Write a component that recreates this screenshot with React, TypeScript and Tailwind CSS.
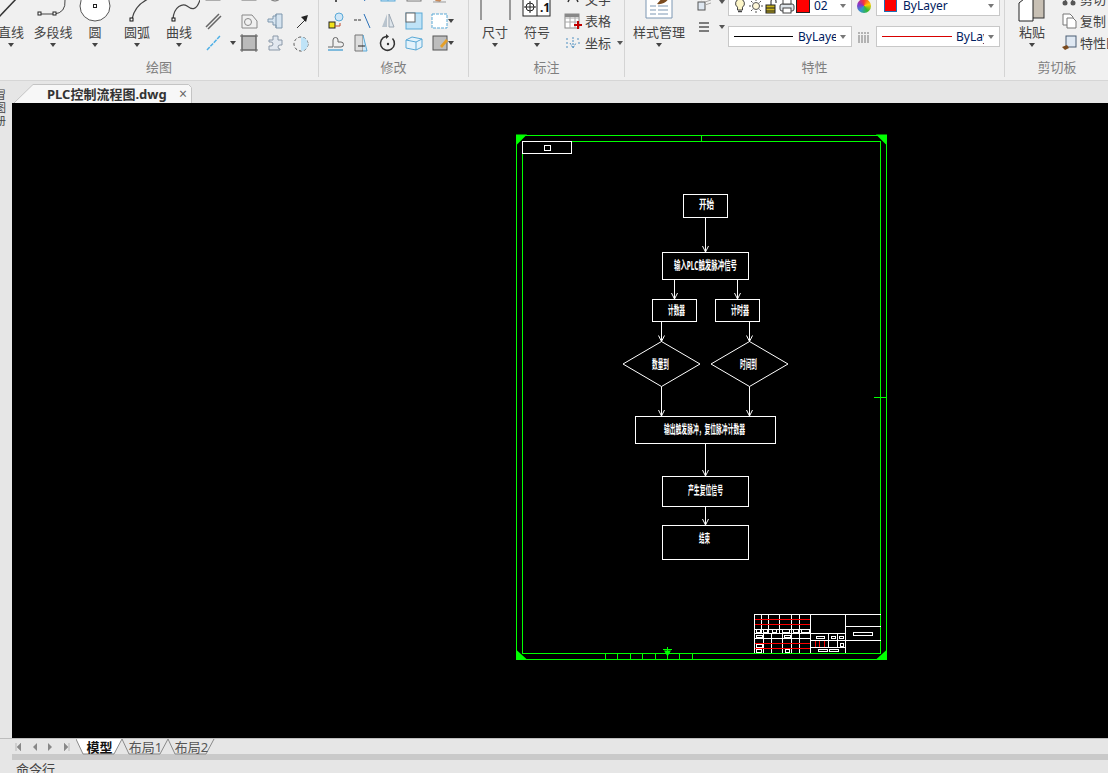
import type { ReactNode } from "react"

function Caret({ className = "" }: { className?: string }) {
  return <div className={`w-0 h-0 border-x-[3px] border-x-transparent border-t-[4px] border-t-[#444] ${className}`} />
}

function Ic({ children, size = 20, w }: { children: ReactNode; size?: number; w?: number }) {
  return (
    <svg width={w ?? size} height={size} viewBox={`0 0 ${w ?? size} ${size}`} fill="none" className="shrink-0">
      {children}
    </svg>
  )
}

function LargeTool({ label, icon, className = "w-[42px]" }: { label: string; icon: ReactNode; className?: string }) {
  return (
    <div className={`flex flex-col items-center h-[58px] shrink-0 ${className}`}>
      <div className="h-[24px] w-full flex justify-center items-end overflow-hidden">{icon}</div>
      <span className="text-[13px] leading-[16px] mt-0 whitespace-nowrap text-[#444]">{label}</span>
      <Caret className="mt-[3px]" />
    </div>
  )
}

function Panel({ label, width, children }: { label: string; width: string; children: ReactNode }) {
  return (
    <div className={`h-[77px] flex flex-col shrink-0 border-r border-[#d4d4d4] ${width}`}>
      <div className="h-[58px] flex overflow-hidden">{children}</div>
      <div className="h-[19px] text-center text-[13px] leading-[18px] text-[#7f7f7f]">{label}</div>
    </div>
  )
}

function SmallGrid({ rows, className = "" }: { rows: ReactNode[][]; className?: string }) {
  return (
    <div className={`flex flex-col -mt-[12px] ${className}`}>
      {rows.map((r, i) => (
        <div key={i} className="h-[22px] flex items-center">
          {r.map((c, j) => (
            <div key={j} className="w-[26px] h-[22px] flex items-center justify-center">{c}</div>
          ))}
        </div>
      ))}
    </div>
  )
}

function Select({ children, width = "w-[124px]" }: { children: ReactNode; width?: string }) {
  return (
    <div className={`h-[21px] ${width} bg-white border border-[#c8c8c8] flex items-center pl-[4px] pr-[5px] shrink-0`}>
      <div className="flex-1 flex items-center min-w-0 overflow-hidden">{children}</div>
      <Caret className="border-t-[#777] ml-[4px]" />
    </div>
  )
}

const blue = "#5aa9d6"
const gray = "#6b6b6b"

const drawGrid: ReactNode[][] = [
  [
    <Ic><rect x="3" y="3" width="14" height="8" stroke={gray} /></Ic>,
    <Ic><circle cx="10" cy="5" r="7" stroke={gray} /></Ic>,
    <Ic><path d="M4 2v8h13M6 8h9" stroke={gray} /></Ic>,
  ],
  [
    <Ic><path d="M3 4h10l5 6v7H3z" stroke="#888" /><circle cx="9" cy="11" r="3.5" stroke="#888" /></Ic>,
    <Ic><path d="M3 8h5V5h3V3h6v14h-6v-3H8v-3H3z" fill="#d6e4f0" stroke="#7f97ad" /><path d="M11 3v14" stroke="#7f97ad" /></Ic>,
    <Ic><path d="M6 17l9-9" stroke="#333" /><path d="M10 6l7-2-2 7z" fill="#222" /></Ic>,
  ],
  [
    <Ic><rect x="3" y="3" width="14" height="14" fill="#bbb" stroke="#666" /><path d="M1 3h18M1 17h18M3 1v18M17 1v18" stroke="#666" /></Ic>,
    <Ic><path d="M4 7h4V3h5v4h4v5h-2a2 2 0 1 0 0 4v1H4v-4h2a2 2 0 1 0 0-4H4z" fill="#e2e8f0" stroke="#8a98a8" /></Ic>,
    <Ic><circle cx="10" cy="11" r="7" stroke="#555" strokeDasharray="3 2" /><path d="M10 11h7a7 7 0 0 1-7 7z" fill="#bfe3f7" /><path d="M10 4v7h7a7 7 0 0 0-7-7z" fill="#bfe3f7" /></Ic>,
  ],
]

const modifyGrid: ReactNode[][] = [
  [
    <Ic><path d="M10 6v7" stroke="#555" strokeWidth="2" /></Ic>,
    <Ic><path d="M7 3l6 9" stroke="#2a70b8" /></Ic>,
    <Ic><rect x="3" y="1" width="14" height="11" fill="#cfe8fa" stroke="#5aa9d6" /><path d="M10 1v11" stroke="#5aa9d6" /></Ic>,
    <Ic><rect x="3" y="1" width="14" height="11" fill="#fff" stroke="#777" /></Ic>,
    <Ic><path d="M5 12l6-9 4 3-5 7z" fill="#c98a5a" /><path d="M3 13h13" stroke="#999" /></Ic>,
  ],
  [
    <Ic><rect x="3" y="11" width="6" height="6" fill="#f2e21a" stroke="#222" /><circle cx="13" cy="6" r="4" fill="#cfe6f7" stroke={blue} /><path d="M9 15h5v-3" stroke="#c04a2a" /></Ic>,
    <Ic><path d="M2 9h8" stroke="#333" strokeDasharray="3 1" /><path d="M12 3l6 14" stroke="#2a70b8" /></Ic>,
    <Ic><path d="M9 3L4 16h5z" fill="#b9c4ce" /><path d="M11 3l5 13h-5z" fill="#dfe6ec" stroke="#9aa6b2" /></Ic>,
    <Ic><rect x="2" y="2" width="16" height="16" fill="#bfe3f7" stroke="#5aa9d6" /><rect x="2" y="2" width="9" height="9" fill="#fff" stroke="#666" /></Ic>,
    <Ic><rect x="2" y="3" width="15" height="14" fill="#fff" stroke={blue} strokeDasharray="3 1" /></Ic>,
  ],
  [
    <Ic><path d="M2 14h5V7a2.500 2.500 0 0 1 5 0v2h3a2.500 2.500 0 0 1 0 5H8" stroke="#666" /><path d="M2 17h15" stroke={blue} strokeWidth="1.500" /></Ic>,
    <Ic><path d="M3 2h8v16H3z" fill="#ddd" stroke="#777" /><path d="M11 2l4 16h-4" fill="#cfe8fa" stroke={blue} /><path d="M6 13h7" stroke="#222" /></Ic>,
    <Ic><path d="M14.500 5.500A7 7 0 1 1 8 3.500" stroke="#333" strokeWidth="1.500" /><path d="M8 1v5l3-2.500z" fill="#333" /><circle cx="10" cy="11" r="1.200" fill="#333" /></Ic>,
    <Ic><path d="M2 7l6-3 10 2v8l-6 3-10-2z" fill="#e3f2fb" stroke={blue} /><path d="M2 7l10 2v8M12 9l6-3" stroke={blue} /></Ic>,
    <Ic><rect x="3" y="3" width="14" height="14" fill="#bdbdbd" stroke="#555" /><path d="M10 13l6-7 2 2-6 7z" fill="#e4a02a" /></Ic>,
  ],
]

function SmallLabelRow({ icon, label, caret }: { icon: ReactNode; label: string; caret?: boolean }) {
  return (
    <div className="h-[22px] flex items-center gap-[3px] whitespace-nowrap">
      {icon}
      <span className="text-[13px] leading-[16px] text-[#444]">{label}</span>
      {caret && <Caret className="ml-[3px] border-t-[#555]" />}
    </div>
  )
}

function LayerStateIcons() {
  return (
    <div className="flex items-center gap-[1px]">
      <Ic size={16} w={14}><path d="M7 1a4.500 4.500 0 0 0-2.500 8.200V12h5V9.200A4.500 4.500 0 0 0 7 1z" fill="#fdf6c8" stroke="#444" /><path d="M5 13.500h4" stroke="#444" strokeWidth="1.500" /></Ic>
      <Ic size={16}><circle cx="8" cy="8" r="3.500" fill="#fff8d8" stroke="#555" /><path d="M8 1v2M8 13v2M1 8h2M13 8h2M3 3l1.500 1.500M13 3l-1.500 1.500M3 13l1.500-1.500M13 13l-1.500-1.500" stroke="#555" /></Ic>
      <Ic size={16} w={13}><rect x="1" y="7" width="9" height="8" fill="#c9b21a" stroke="#222" /><path d="M6 7V3a2.500 2.500 0 0 1 5 0v2" stroke="#222" /><path d="M1 10h9M1 13h9" stroke="#222" /></Ic>
      <Ic size={16}><rect x="1" y="6" width="14" height="7" rx="2" fill="#dfe5ea" stroke="#444" /><rect x="4" y="1" width="8" height="5" fill="#fff" stroke="#444" /><rect x="4" y="10" width="8" height="5" fill="#fff" stroke="#444" /></Ic>
      <div className="w-[14px] h-[14px] bg-[#ff0000] border border-[#222]" />
      <span className="ml-[3px] text-[12px] leading-[16px] text-[#002060]">02</span>
    </div>
  )
}

function TitleBlock() {
  const whites = [
    [756, 629, 4, 2.500], [763, 629, 4, 2.500], [772, 629, 4, 2.500], [782, 629, 7, 2.500], [793, 629, 5, 2.500], [801, 629, 8, 2.500],
    [756, 634.500, 6, 2.500], [784, 634.500, 6, 2.500], [756, 643.500, 6, 3.500], [756, 648.500, 5, 3], [785, 648.500, 4, 3],
    [816, 635.500, 8, 2.500], [831, 635.500, 4, 2.500], [839, 635.500, 4, 2.500], [840, 642.500, 3, 3], [818, 648.500, 9, 2.500], [829, 648.500, 9, 2.500],
    [853.500, 631.500, 19, 3],
  ]
  const v = [
    [761.500, 613.500, 632.500], [768.500, 613.500, 632.500], [779.500, 613.500, 632.500], [791.500, 613.500, 652.500], [799.500, 613.500, 652.500],
    [763.500, 632.500, 652.500], [771.500, 632.500, 652.500], [782.500, 632.500, 652.500], [810.500, 613.500, 652.500], [845.500, 613.500, 652.500],
    [828.500, 632.500, 646.500], [837.500, 632.500, 646.500], [754.500, 613.500, 652.500],
  ]
  const h = [
    [754.500, 810.500, 628.500], [754.500, 845.500, 632.500], [754.500, 810.500, 637.500], [810.500, 845.500, 639.500], [810.500, 845.500, 646.500],
    [845.500, 880.500, 625.500], [845.500, 880.500, 639.500], [754.500, 880.500, 613.500],
  ]
  return (
    <g stroke="#fff">
      {v.map(([x, a, b], i) => <path key={i} d={`M${x} ${a}V${b}`} />)}
      {h.map(([a, b, y], i) => <path key={i} d={`M${a} ${y}H${b}`} />)}
      {whites.map(([x, y, w, hh], i) => <rect key={i} x={x} y={y} width={w} height={hh} fill="none" />)}
      <path d="M755 618.500H810M755 623.500H810M755 642.500H810M755 647.500H810M815.500 640V646M819.500 640V646M824.500 640V646" stroke="#ff0000" />
    </g>
  )
}

function Arrow({ x, y1, y2 }: { x: number; y1: number; y2: number }) {
  return <path d={`M${x} ${y1}V${y2}M${x - 3} ${y2 - 6}L${x} ${y2}L${x + 3} ${y2 - 6}`} />
}

const boxes = [
  [683.500, 193.500, 44, 23], [662.500, 251.500, 86, 27], [652.500, 298.500, 44, 22], [715.500, 298.500, 44, 22],
  [635.500, 415.500, 140, 27], [662.500, 475.500, 86, 30], [662.500, 524.500, 86, 34],
]

const labels: [string, number, number, number][] = [
  ["开始", 699, 208, 15],
  ["输入PLC触发脉冲信号", 674, 269, 63],
  ["计数器", 668, 314, 17],
  ["计时器", 731, 314, 18],
  ["数量到", 652, 368, 17],
  ["时间到", 740, 368, 17],
  ["输出触发脉冲，复位脉冲计数器", 664, 433, 81],
  ["产生复位信号", 688, 494, 35],
  ["结束", 699, 542, 11],
]

function Drawing() {
  return (
    <svg viewBox="12 103 1096 635" className="w-full h-full block" fill="none">
      <g shapeRendering="crispEdges" stroke="#00ff00">
        <rect x="516.500" y="134.500" width="370" height="524" />
        <rect x="522.500" y="140.500" width="358" height="512" />
        <path d="M701.500 134.500V141M874 396.500H887M605.500 652.500V658M617.500 652.500V658M630.500 652.500V658M642.500 652.500V658M655.500 652.500V658M679.500 652.500V658M692.500 652.500V658M663 648.500H672M667.500 646V658" />
      </g>
      <g fill="#00ff00">
        <path d="M516 134h11l-11 11zM887 134h-11l11 11zM516 659h11l-11-10zM887 659h-11l11-10z" />
        <path d="M664 650h7l-3.500 6z" />
      </g>
      <g stroke="#fff" shapeRendering="crispEdges">
        <rect x="522.500" y="140.500" width="49" height="12" />
        <rect x="544.500" y="144.500" width="6" height="5" />
        {boxes.map(([x, y, w, h], i) => <rect key={i} x={x} y={y} width={w} height={h} />)}
      </g>
      <g stroke="#fff">
        <path d="M623 363.500L661.500 341L700 363.500L661.500 386ZM711 363.500L749.500 341L788 363.500L749.500 386Z" />
        <Arrow x={705.500} y1={216.500} y2={251.500} />
        <Arrow x={674.500} y1={278.500} y2={298.500} />
        <Arrow x={737.500} y1={278.500} y2={298.500} />
        <Arrow x={661.500} y1={320.500} y2={341} />
        <Arrow x={749.500} y1={320.500} y2={341} />
        <Arrow x={661.500} y1={386} y2={415.500} />
        <Arrow x={749.500} y1={386} y2={415.500} />
        <Arrow x={705.500} y1={442.500} y2={475.500} />
        <Arrow x={705.500} y1={505.500} y2={524.500} />
      </g>
      <g shapeRendering="crispEdges"><TitleBlock /></g>
      {labels.map(([t, x, y, w]) => (
        <text key={t} x={x} y={y} textLength={w} lengthAdjust="spacingAndGlyphs" fontSize="12" fontWeight="700" fill="#fff">{t}</text>
      ))}
    </svg>
  )
}

function SheetTab({ label, active }: { label: string; active?: boolean }) {
  return (
    <div className={`relative h-[16px] w-[47px] -mr-[1px] flex items-center justify-center shrink-0 ${active ? "font-bold text-[#111]" : "text-[#555]"}`}>
      <svg width="47" height="16" viewBox="0 0 47 16" className="absolute inset-0">
        <path d="M0 0L7 15H38L46 0" fill={active ? "#fff" : "none"} stroke="#8a8a8a" />
      </svg>
      <span className="relative text-[13px] leading-[16px]">{label}</span>
    </div>
  )
}

export default function App() {
  return (
    <div className="w-[1108px] h-[773px] overflow-hidden flex flex-col bg-[#e6e6e6] font-['Noto_Sans','Noto_Sans_CJK_SC',sans-serif]">
      {/* ribbon */}
      <div className="h-[81px] shrink-0 flex bg-[#f0f0f0] border-b border-[#d6d6d6] overflow-hidden">
        <Panel label="绘图" width="w-[319px]">
          <div className="flex -ml-[10px]">
            <LargeTool label="直线" icon={<Ic size={24} w={42}><path d="M8 18L27 -2" stroke="#333" strokeWidth="1.500" /></Ic>} />
            <LargeTool label="多段线" icon={<Ic size={24} w={42}><path d="M8 14h14q12-1 11-14" stroke="#444" /><rect x="6" y="12" width="3" height="3" fill="#fff" stroke="#222" /><rect x="21" y="12" width="3" height="3" fill="#fff" stroke="#222" /></Ic>} />
            <LargeTool label="圆" icon={<Ic size={24} w={42}><circle cx="21" cy="6" r="15" fill="#fff" stroke="#555" /><rect x="19.500" y="4.500" width="3" height="3" fill="#fff" stroke="#222" /></Ic>} />
            <LargeTool label="圆弧" icon={<Ic size={24} w={42}><path d="M16 19C18 9 24 3 32 -1" stroke="#444" strokeWidth="1.200" /><rect x="14" y="18" width="3" height="3" fill="#fff" stroke="#111" /></Ic>} />
            <LargeTool label="曲线" icon={<Ic size={24} w={42}><path d="M15 19C16 6 25 3 29 6S38 12 42 0" stroke="#444" strokeWidth="1.200" /><rect x="14" y="18" width="3" height="3" fill="#fff" stroke="#111" /></Ic>} />
          </div>
          <div className="ml-[1px] -mt-[12px] w-[35px] flex flex-col">
            <div className="h-[22px] flex items-center pl-[2px]"><Ic><rect x="3" y="3" width="14" height="8" stroke={gray} /></Ic></div>
            <div className="h-[22px] flex items-center pl-[2px]"><Ic><path d="M3 16L16 3M5 18L18 5" stroke="#666" strokeWidth="1.500" /></Ic></div>
            <div className="h-[22px] flex items-center pl-[2px]">
              <Ic><path d="M4 17L17 3" stroke="#4fb0e6" strokeWidth="1.500" strokeDasharray="4 1" /></Ic>
              <Caret className="ml-[7px]" />
            </div>
          </div>
          <SmallGrid rows={drawGrid} />
        </Panel>

        <Panel label="修改" width="w-[150px]">
          <SmallGrid rows={modifyGrid} className="ml-[4px]" />
          <div className="-mt-[12px] -ml-[5px] w-[10px] flex flex-col">
            <div className="h-[22px]" />
            <div className="h-[22px] flex items-center"><Caret /></div>
            <div className="h-[22px] flex items-center"><Caret /></div>
          </div>
        </Panel>

        <Panel label="标注" width="w-[156px]">
          <LargeTool className="w-[42px] ml-[5px]" label="尺寸" icon={<Ic size={24} w={42}><path d="M7 20V0M36 20V0" stroke="#444" /></Ic>} />
          <LargeTool className="w-[42px]" label="符号" icon={
            <svg width="42" height="24" viewBox="0 0 42 24" fill="none" className="shrink-0">
              <rect x="7" y="-2" width="27" height="18" fill="#fff" stroke="#222" />
              <path d="M21 -2v18" stroke="#222" />
              <circle cx="14" cy="7" r="4" stroke="#222" />
              <path d="M8 7h12M14 1v12" stroke="#222" />
              <text x="24" y="12" fontSize="12" fontWeight="700" fill="#111">.1</text>
            </svg>
          } />
          <div className="-mt-[12px] ml-[6px] flex flex-col">
            <SmallLabelRow label="文字" icon={<Ic size={18}><path d="M4 12L9 1l5 11M6 8h6" stroke="#333" strokeWidth="1.500" /></Ic>} />
            <SmallLabelRow label="表格" icon={<Ic size={18}><rect x="1" y="2" width="14" height="14" fill="#fff" stroke="#888" /><path d="M1 6h14M1 10h14M6 2v14M11 2v14" stroke="#aaa" /><rect x="1" y="2" width="14" height="3" fill="#888" /><path d="M14 9v8M10 13h8" stroke="#c00000" strokeWidth="2" /></Ic>} />
            <SmallLabelRow label="坐标" caret icon={<Ic size={18}><path d="M2 5h3M13 5h3M2 13h3M2 9h2M14 9h2M9 3v12M6 9l3 5 3-5" stroke="#4f8fc0" strokeDasharray="2 1" /></Ic>} />
          </div>
        </Panel>

        <Panel label="特性" width="w-[380px]">
          <LargeTool className="w-[64px] ml-[2px]" label="样式管理" icon={
            <Ic size={24} w={32}><path d="M3 -6h26v24H3z" fill="#fff" stroke="#7d97b3" /><path d="M7 6h6M15 6h10M7 10h6M15 10h10M7 14h6M15 14h10" stroke="#7d97b3" /><path d="M14 4q8 1 12-6l-6-1z" fill="#7a4a1e" /></Ic>
          } />
          <div className="-mt-[12px] flex flex-col ml-[2px]">
            <div className="h-[22px] flex items-center gap-[3px] mt-[3px]">
              <div className="w-[22px] flex justify-center"><Ic size={18}><rect x="3" y="9" width="7" height="8" fill="#dfe8f2" stroke="#555" /><path d="M6 7l6-4 4 2M10 9l6-2M10 12l6-2" stroke="#aaa" /></Ic></div>
              <Caret className="border-t-[#555] ml-[1px] mr-[2px]" />
            </div>
            <div className="h-[20px] flex items-center gap-[3px] mt-[4px]">
              <div className="w-[22px] flex justify-center"><Ic size={14}><path d="M2 3h10M2 7h10M2 11h10" stroke="#555" strokeWidth="1.500" /></Ic></div>
              <Caret className="border-t-[#555] ml-[1px] mr-[2px]" />
            </div>
          </div>
          <div className="flex flex-col -mt-[5px] gap-[10px] ml-[1px]">
            <Select><LayerStateIcons /></Select>
            <Select>
              <div className="w-[59px] h-[1px] bg-black ml-[1px] mr-[5px] shrink-0" />
              <span className="text-[12px] leading-[16px] text-[#002060]">ByLayer</span>
            </Select>
          </div>
          <div className="flex flex-col -mt-[5px] w-[24px] items-center gap-[10px]">
            <div className="h-[21px] flex items-center">
              <div className="w-[14px] h-[14px] rounded-full bg-[conic-gradient(#f33,#fc0,#3b3,#39c,#83c,#f33)]" />
            </div>
            <div className="h-[21px] flex items-center">
              <Ic size={14}><path d="M1 3h12M1 6h12M1 8h12M1 10h12M1 12h12" stroke="#777" strokeDasharray="2 1" /></Ic>
            </div>
          </div>
          <div className="flex flex-col -mt-[5px] gap-[10px]">
            <Select>
              <div className="w-[13px] h-[13px] bg-[#ff0000] border border-[#1e6fb5] ml-[3px] mr-[6px] shrink-0" />
              <span className="text-[12px] leading-[16px] text-[#002060]">ByLayer</span>
            </Select>
            <Select>
              <div className="w-[70px] h-[1px] bg-[#d80000] ml-[1px] mr-[4px] shrink-0" />
              <span className="text-[12px] leading-[16px] text-[#002060]">ByLayer</span>
            </Select>
          </div>
        </Panel>

        <Panel label="剪切板" width="w-[104px] border-r-0">
          <LargeTool className="w-[46px] ml-[4px]" label="粘贴" icon={
            <Ic size={24} w={32}><rect x="14" y="-4" width="14" height="22" fill="#c8c0b4" stroke="#333" /><path d="M3 3L8 -1h9v22H3z" fill="#fff" stroke="#222" /></Ic>
          } />
          <div className="-mt-[12px] ml-[6px] flex flex-col">
            <SmallLabelRow label="剪切" icon={<Ic size={16}><path d="M3 2l9 8M13 2l-9 8" stroke="#555" /><circle cx="4" cy="12" r="2.500" fill="#555" /><circle cx="12" cy="12" r="2.500" fill="#555" /></Ic>} />
            <SmallLabelRow label="复制" caret icon={<Ic size={16}><path d="M2 1h7l3 3v8H2z" fill="#fff" stroke="#777" /><path d="M6 5h6l3 3v7H6z" fill="#fff" stroke="#777" /></Ic>} />
            <SmallLabelRow label="特性匹配" icon={<Ic size={16}><rect x="5" y="1" width="10" height="11" fill="#dfe8f2" stroke="#4a5d73" /><path d="M1 12l5-2 2 3-4 2z" fill="#7a4a1e" /></Ic>} />
          </div>
        </Panel>
      </div>

      {/* file tab */}
      <div className="h-[22px] shrink-0 flex items-end">
        <div className="relative ml-[14px] w-[178px] h-[19px] flex items-center">
          <svg width="178" height="19" viewBox="0 0 178 19" className="absolute inset-0">
            <path d="M0 19L19 .5H174.500l3 3V19" fill="#f7f7f7" stroke="#c4c4c4" />
          </svg>
          <span className="relative ml-[33px] text-[13px] leading-[16px] font-bold text-[#333] whitespace-nowrap">PLC控制流程图.dwg</span>
          <span className="absolute right-[5px] top-[3px] text-[14px] leading-[14px] text-[#666]">×</span>
        </div>
      </div>

      {/* drawing area */}
      <div className="flex-1 flex min-h-0">
        <div className="w-[12px] shrink-0 relative overflow-visible">
          <div className="absolute -left-[5px] -top-[15px] w-[12px] text-[11px] leading-[13px] text-[#444]">冒<br />图<br />册</div>
        </div>
        <div className="flex-1 bg-black min-w-0"><Drawing /></div>
      </div>

      {/* sheet tabs */}
      <div className="h-[16px] shrink-0 flex items-center pl-[12px] border-t border-[#bdbdbd] -mt-[1px]">
        <div className="w-[64px] flex items-center gap-[11px] pl-[3px] text-[#888] shrink-0">
          <Ic size={8} w={6}><path d="M1 0v8M6 0L2 4l4 4z" fill="#888" stroke="#888" strokeWidth=".5" /></Ic>
          <Ic size={8} w={5}><path d="M5 0L1 4l4 4z" fill="#888" /></Ic>
          <Ic size={8} w={5}><path d="M0 0l4 4-4 4z" fill="#888" /></Ic>
          <Ic size={8} w={6}><path d="M5 0v8M0 0l4 4-4 4z" fill="#888" stroke="#888" strokeWidth=".5" /></Ic>
        </div>
        <SheetTab label="模型" active />
        <SheetTab label="布局1" />
        <SheetTab label="布局2" />
      </div>
      <div className="h-[6px] shrink-0 ml-[12px] bg-[#c9c9c9]" />
      <div className="h-[13px] shrink-0 pl-[16px] text-[13px] leading-[18px] text-[#444] overflow-hidden">命令行</div>
    </div>
  )
}
